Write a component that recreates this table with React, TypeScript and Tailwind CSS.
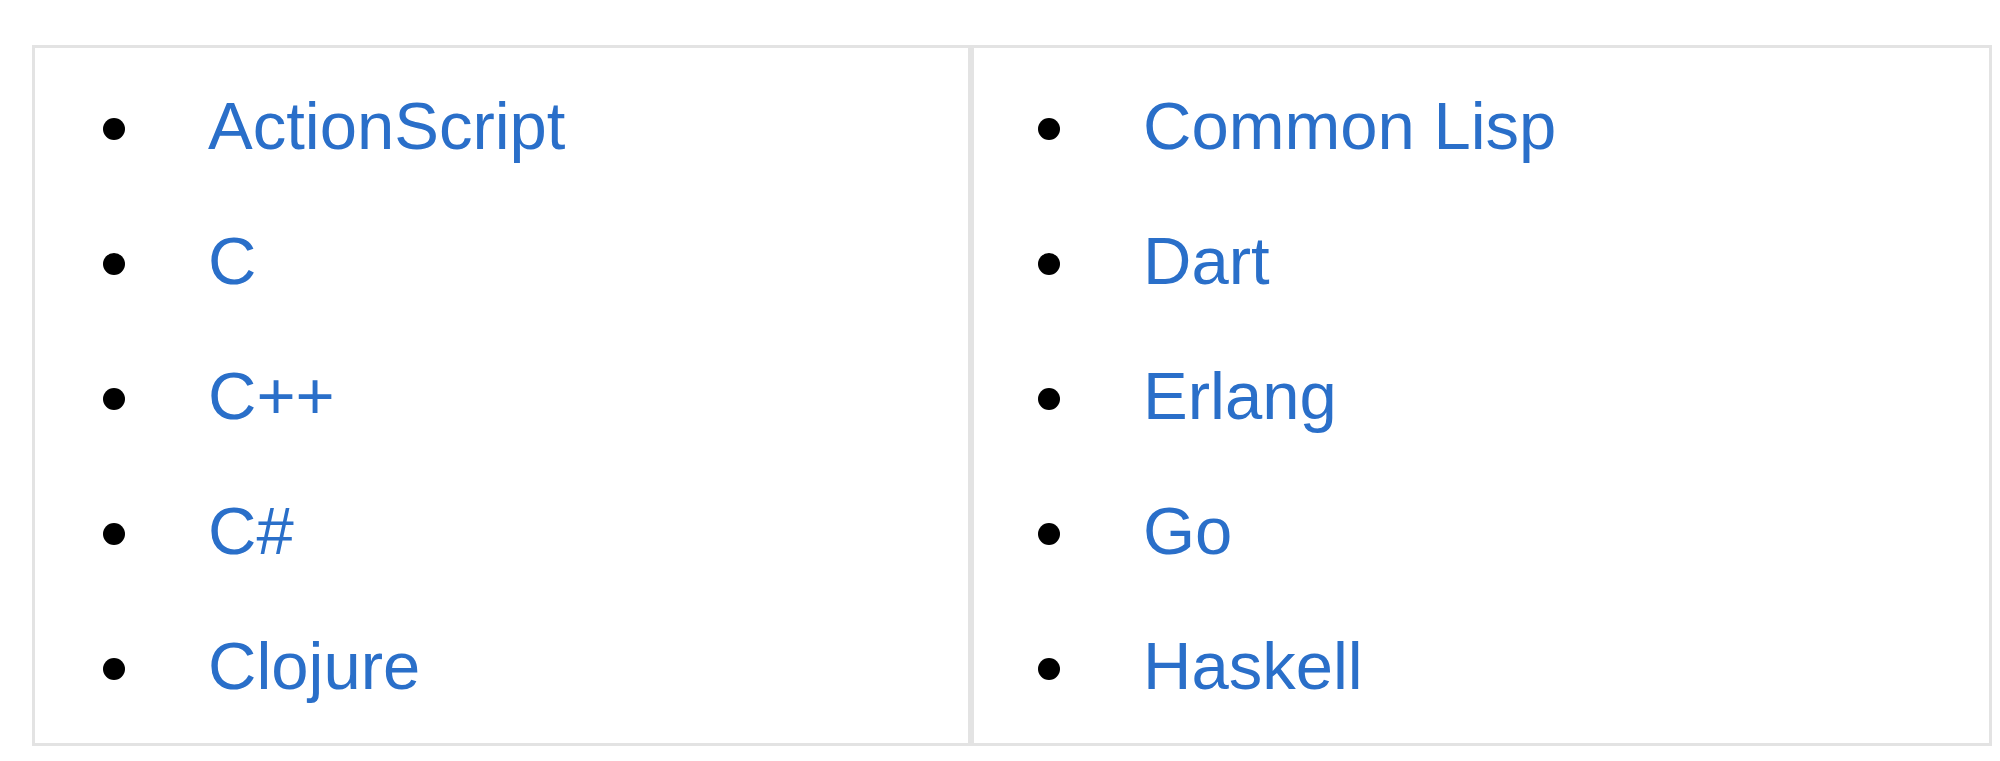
import React from 'react';

const left = ['ActionScript', 'C', 'C++', 'C#', 'Clojure'];
const right = ['Common Lisp', 'Dart', 'Erlang', 'Go', 'Haskell'];

interface ListProps {
  items: string[];
  padLeft: string;
}

const LangList: React.FC<ListProps> = ({ items, padLeft }) => (
  <ul className={`flex flex-col py-[10px] ${padLeft}`}>
    {items.map((name) => (
      <li key={name} className="flex items-center h-[135px] leading-[135px]">
        <span className="mt-[6px] w-[22px] h-[22px] rounded-full bg-black shrink-0" />
        <a href="#" className="ml-[83px] text-[#2a6fc9] no-underline">
          {name}
        </a>
      </li>
    ))}
  </ul>
);

export default function App() {
  return (
    <div className="bg-white w-[2000px] h-[761px] pt-[45px] pl-[32px] font-['Liberation_Sans',Arial,sans-serif] text-[67px]">
      <div className="flex w-[1960px] border-[3px] border-[#e3e3e3]">
        <div className="w-[936px] border-r-[3px] border-[#e3e3e3]">
          <LangList items={left} padLeft="pl-[68px]" />
        </div>
        <div className="flex-1 border-l-[3px] border-[#e3e3e3]">
          <LangList items={right} padLeft="pl-[64px]" />
        </div>
      </div>
    </div>
  );
}
